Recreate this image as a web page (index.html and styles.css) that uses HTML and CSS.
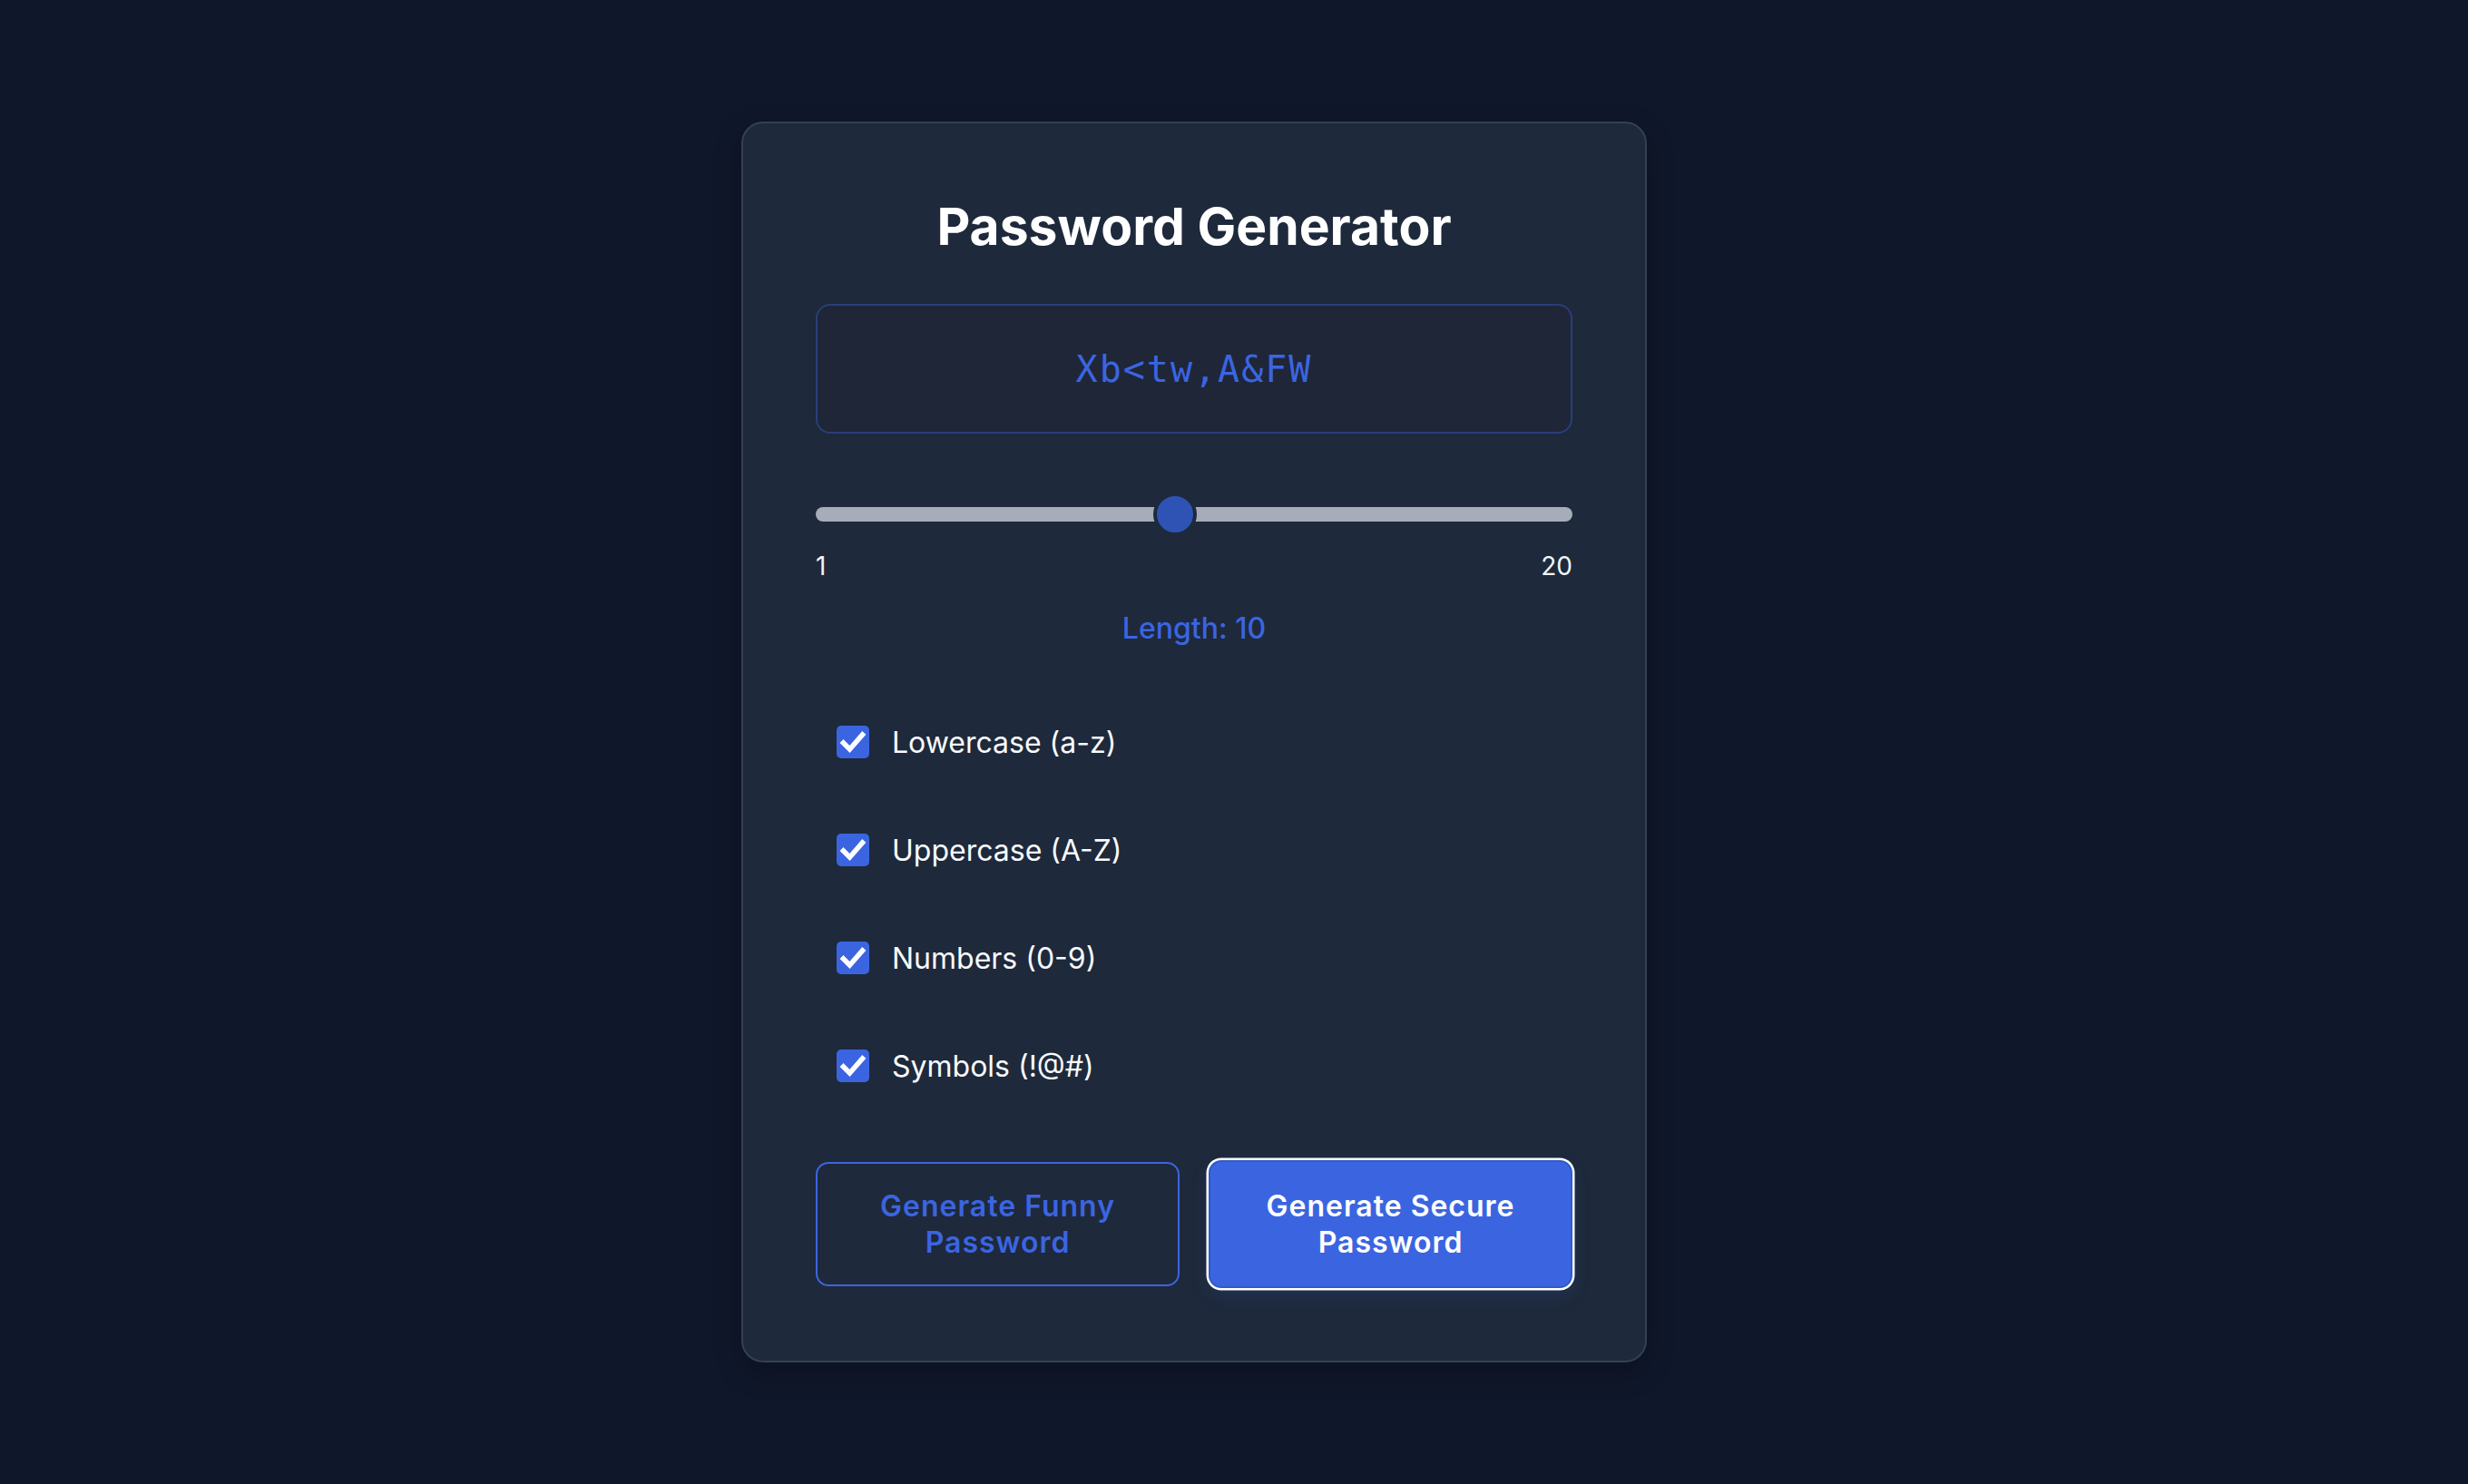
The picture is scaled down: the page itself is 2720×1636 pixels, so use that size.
FILE: index.html
```html
<!DOCTYPE html>
<html lang="en">
<head>
<meta charset="utf-8">
<title>Password Generator</title>
<link rel="stylesheet" href="styles.css">
</head>
<body>
<main class="page">
  <section class="card">
    <h1 class="title">Password Generator</h1>
    <div class="output"><span class="password">Xb&lt;tw,A&amp;FW</span></div>
    <div class="slider">
      <input class="range" type="range" min="1" max="20" value="10">
      <div class="range-labels"><span>1</span><span>20</span></div>
    </div>
    <p class="length">Length: 10</p>
    <ul class="options">
      <li class="option"><span class="check"><svg viewBox="0 0 36 36"><path d="M7.5 19 L14.5 26 L28.5 10"/></svg></span><span class="opt-label">Lowercase (a-z)</span></li>
      <li class="option"><span class="check"><svg viewBox="0 0 36 36"><path d="M7.5 19 L14.5 26 L28.5 10"/></svg></span><span class="opt-label">Uppercase (A-Z)</span></li>
      <li class="option"><span class="check"><svg viewBox="0 0 36 36"><path d="M7.5 19 L14.5 26 L28.5 10"/></svg></span><span class="opt-label">Numbers (0-9)</span></li>
      <li class="option"><span class="check"><svg viewBox="0 0 36 36"><path d="M7.5 19 L14.5 26 L28.5 10"/></svg></span><span class="opt-label">Symbols (!@#)</span></li>
    </ul>
    <div class="actions">
      <button class="btn btn-outline">Generate Funny Password</button>
      <button class="btn btn-primary">Generate Secure Password</button>
    </div>
  </section>
</main>
</body>
</html>
```
FILE: styles.css
```css
* { box-sizing: border-box; }
html, body { margin: 0; padding: 0; }
body {
  background: #0f172a;
  font-family: Inter, "Noto Sans", sans-serif;
  color: #f8fafc;
}
.page {
  min-height: 100vh;
  display: flex;
  align-items: center;
  justify-content: center;
  padding-right: 88px;
}
.card {
  width: 998px;
  background: #1e293b;
  border: 2px solid #334155;
  border-radius: 24px;
  padding: 80px;
  display: flex;
  flex-direction: column;
  box-shadow: 0 10px 30px rgba(0,0,0,0.25);
}
.title {
  margin: 0;
  text-align: center;
  font-size: 57px;
  line-height: 68px;
  font-weight: 700;
  color: #ffffff;
  margin-bottom: 51px;
}
.output {
  height: 143px;
  border: 2px solid rgba(59, 99, 224, 0.4);
  border-radius: 16px;
  background: #1e2638;
  display: flex;
  align-items: center;
  justify-content: center;
}
.password {
  font-family: "DejaVu Sans Mono", "Liberation Mono", monospace;
  font-size: 40px;
  letter-spacing: 2px;
  color: #3b65e0;
}
.slider {
  margin-top: 65px;
  display: flex;
  flex-direction: column;
}
.range {
  -webkit-appearance: none;
  appearance: none;
  width: 100%;
  height: 48px;
  margin: 0;
  background: transparent;
  outline: none;
}
.range::-webkit-slider-runnable-track {
  height: 16px;
  background: #a6adb8;
  border-radius: 8px;
}
.range::-webkit-slider-thumb {
  -webkit-appearance: none;
  appearance: none;
  width: 48px;
  height: 48px;
  margin-top: -16px;
  border-radius: 50%;
  background: #2e53b5;
  border: 4px solid #1e293b;
}
.range-labels {
  display: flex;
  justify-content: space-between;
  font-size: 28px;
  line-height: 34px;
  color: #f1f5f9;
  margin-top: 16px;
}
.length {
  margin: 32px 0 0;
  text-align: center;
  font-size: 32px;
  line-height: 39px;
  font-weight: 500;
  color: #3b65e0;
}
.options {
  list-style: none;
  margin: 88px 0 0;
  padding: 0 0 0 23px;
  display: flex;
  flex-direction: column;
  gap: 83px;
}
.option {
  display: flex;
  align-items: center;
  gap: 25px;
  height: 36px;
}
.check {
  width: 36px;
  height: 36px;
  border-radius: 5px;
  background: #3b65e0;
  display: flex;
}
.check svg {
  width: 36px;
  height: 36px;
  fill: none;
  stroke: #ffffff;
  stroke-width: 5.5;
  stroke-linecap: square;
}
.opt-label {
  font-size: 32px;
  color: #f8fafc;
}
.actions {
  margin-top: 86px;
  display: grid;
  grid-template-columns: 1fr 1fr;
  gap: 32px;
  align-items: center;
}
.btn {
  font-family: Inter, "Noto Sans", sans-serif;
  font-size: 32px;
  line-height: 40px;
  font-weight: 600;
  letter-spacing: 1px;
  border-radius: 14px;
  padding: 0 40px;
  cursor: pointer;
}
.btn-outline {
  height: 137px;
  background: transparent;
  color: #3b65e0;
  border: 2px solid #3b65e0;
}
.btn-primary {
  height: 141px;
  background: #3b65e0;
  color: #ffffff;
  border: 2px solid #2f5bc8;
  box-shadow: 0 0 0 2.5px #ffffff, 0 8px 20px rgba(59, 101, 224, 0.15);
}
```
